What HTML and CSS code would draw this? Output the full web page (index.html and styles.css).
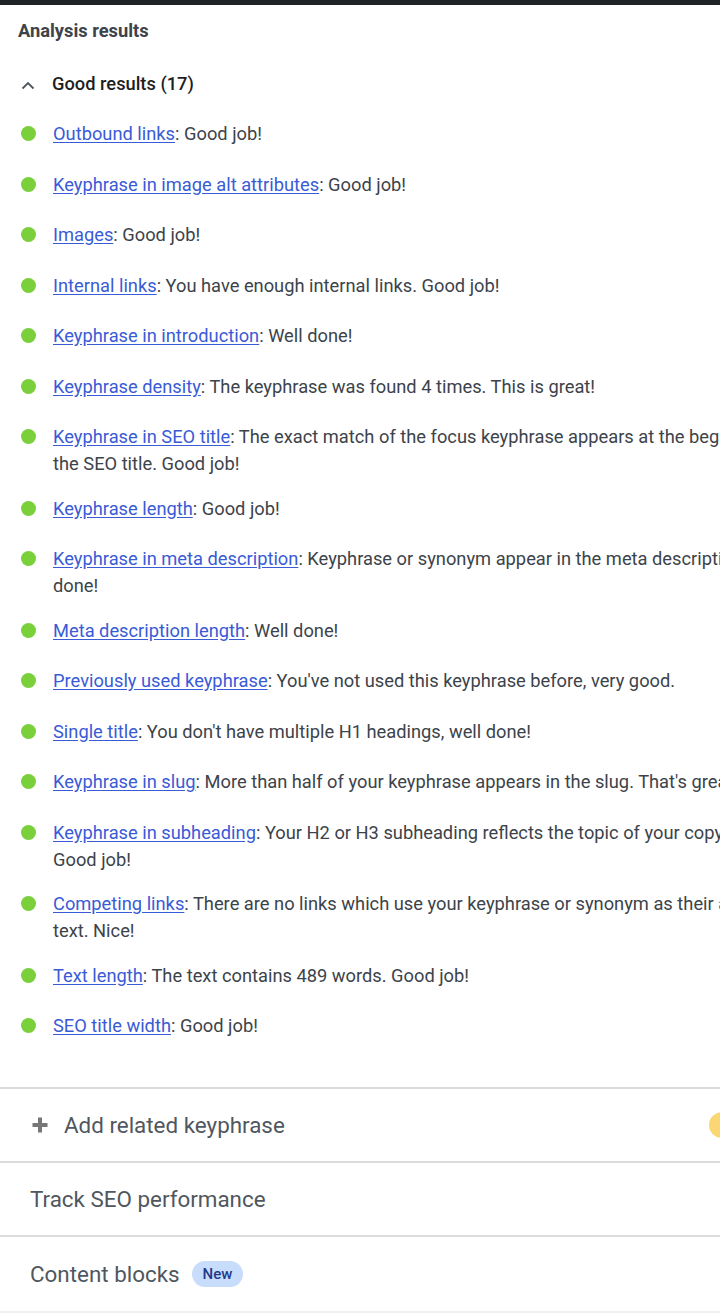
FILE: index.html
```html
<!DOCTYPE html>
<html lang="en">
<head>
    <meta charset="UTF-8">
    <meta name="viewport" content="width=device-width, initial-scale=1.0">
    <title>Analysis results</title>
    <link rel="stylesheet" href="styles.css">
</head>
<body>
    <div class="topbar"></div>
    <div class="panel">
        <h3 class="panel-title">Analysis results</h3>

        <button class="results-toggle" type="button">
            <svg class="chevron" width="14" height="9" viewBox="0 0 14 9">
                <path d="M1.5 7.5 L7 2 L12.5 7.5" fill="none" stroke="#50575e" stroke-width="1.8"/>
            </svg>
            <span>Good results (17)</span>
        </button>

        <ul class="results">
            <li class="result"><span class="bullet"></span><p class="result-text"><a href="#">Outbound links</a>: Good job!</p></li>
            <li class="result"><span class="bullet"></span><p class="result-text"><a href="#">Keyphrase in image alt attributes</a>: Good job!</p></li>
            <li class="result"><span class="bullet"></span><p class="result-text"><a href="#">Images</a>: Good job!</p></li>
            <li class="result"><span class="bullet"></span><p class="result-text"><a href="#">Internal links</a>: You have enough internal links. Good job!</p></li>
            <li class="result"><span class="bullet"></span><p class="result-text"><a href="#">Keyphrase in introduction</a>: Well done!</p></li>
            <li class="result"><span class="bullet"></span><p class="result-text"><a href="#">Keyphrase density</a>: The keyphrase was found 4 times. This is great!</p></li>
            <li class="result"><span class="bullet"></span><p class="result-text"><a href="#">Keyphrase in SEO title</a>: The exact match of the focus keyphrase appears at the beginning of the SEO title. Good job!</p></li>
            <li class="result"><span class="bullet"></span><p class="result-text"><a href="#">Keyphrase length</a>: Good job!</p></li>
            <li class="result"><span class="bullet"></span><p class="result-text"><a href="#">Keyphrase in meta description</a>: Keyphrase or synonym appear in the meta description. Well done!</p></li>
            <li class="result"><span class="bullet"></span><p class="result-text"><a href="#">Meta description length</a>: Well done!</p></li>
            <li class="result"><span class="bullet"></span><p class="result-text"><a href="#">Previously used keyphrase</a>: You've not used this keyphrase before, very good.</p></li>
            <li class="result"><span class="bullet"></span><p class="result-text"><a href="#">Single title</a>: You don't have multiple H1 headings, well done!</p></li>
            <li class="result"><span class="bullet"></span><p class="result-text"><a href="#">Keyphrase in slug</a>: More than half of your keyphrase appears in the slug. That's great!</p></li>
            <li class="result"><span class="bullet"></span><p class="result-text"><a href="#">Keyphrase in subheading</a>: Your H2 or H3 subheading reflects the topic of your copy. Good job!</p><button class="marker" type="button" aria-label="Highlight this result in the text"></button></li>
            <li class="result"><span class="bullet"></span><p class="result-text"><a href="#">Competing links</a>: There are no links which use your keyphrase or synonym as their anchor text. Nice!</p></li>
            <li class="result"><span class="bullet"></span><p class="result-text"><a href="#">Text length</a>: The text contains 489 words. Good job!</p></li>
            <li class="result"><span class="bullet"></span><p class="result-text"><a href="#">SEO title width</a>: Good job!</p></li>
        </ul>
    </div>

    <div class="section section-add">
        <svg class="plus" width="18" height="18" viewBox="0 0 18 18">
            <path d="M9 1.5 V16.5 M1.5 9 H16.5" stroke="#777" stroke-width="4"/>
        </svg>
        <span class="section-label">Add related keyphrase</span>
        <span class="score-dot"></span>
    </div>
    <div class="section">
        <span class="section-label">Track SEO performance</span>
    </div>
    <div class="section section-last">
        <span class="section-label">Content blocks</span>
        <span class="badge">New</span>
    </div>
</body>
</html>
```

FILE: styles.css
```css
/* Base */
* {
    margin: 0;
    padding: 0;
    box-sizing: border-box;
}

body {
    font-family: Roboto, "Liberation Sans", Arial, sans-serif;
    background-color: #fff;
    color: #3c434a;
    width: 720px;
    overflow: hidden;
}

.topbar {
    height: 5px;
    background-color: #1d2327;
}

/* Panel */
.panel {
    width: 820px;
    padding-bottom: 24px;
}

.panel-title {
    font-size: 18.3px;
    font-weight: 700;
    color: #3c434a;
    line-height: 24px;
    padding: 14px 18px 0;
}

.results-toggle {
    display: flex;
    align-items: center;
    gap: 17px;
    background: transparent;
    border: none;
    font-family: inherit;
    font-size: 18.3px;
    font-weight: 500;
    color: #1e1e1e;
    line-height: 24px;
    padding: 0 0 0 21px;
    margin-top: 29px;
}

.chevron {
    margin-top: 2px;
}

/* Results list */
.results {
    list-style: none;
    margin-top: 24px;
}

.result {
    display: flex;
    align-items: flex-start;
    width: 805px;
    min-height: 33px;
    margin-bottom: 17.5px;
}

.bullet {
    flex: none;
    width: 15px;
    height: 15px;
    border-radius: 50%;
    background-color: #7ad03a;
    margin: 6px 17px 0 21px;
}

.result-text {
    flex: 1;
    font-size: 18.3px;
    line-height: 27px;
    color: #3c434a;
}

.result-text a {
    color: #3a5bd6;
    text-decoration: underline;
    text-underline-offset: 2px;
}

.marker {
    flex: none;
    width: 36px;
    height: 33px;
    margin-left: 8px;
    background: #fff;
    border: 1px solid #dcdcde;
    border-radius: 4px;
}

/* Sections */
.section {
    display: flex;
    align-items: center;
    width: 760px;
    height: 74px;
    padding: 0 25px 0 30px;
    border-top: 2px solid #dcdcde;
}

.section-last {
    height: 78px;
    border-bottom: 2px solid #f0f0f1;
}

.section-label {
    font-size: 22.4px;
    color: #50575e;
}

.section-add .section-label {
    margin-left: 15px;
}

.plus {
    margin-left: 1px;
}

.score-dot {
    width: 26px;
    height: 26px;
    border-radius: 50%;
    background-color: #fbd774;
    margin-left: auto;
}

.badge {
    margin-left: 12px;
    padding: 3px 11px;
    background-color: #c8dcfc;
    color: #1e3a8a;
    border-radius: 14px;
    font-size: 15px;
    font-weight: 500;
    line-height: 20px;
}
```
